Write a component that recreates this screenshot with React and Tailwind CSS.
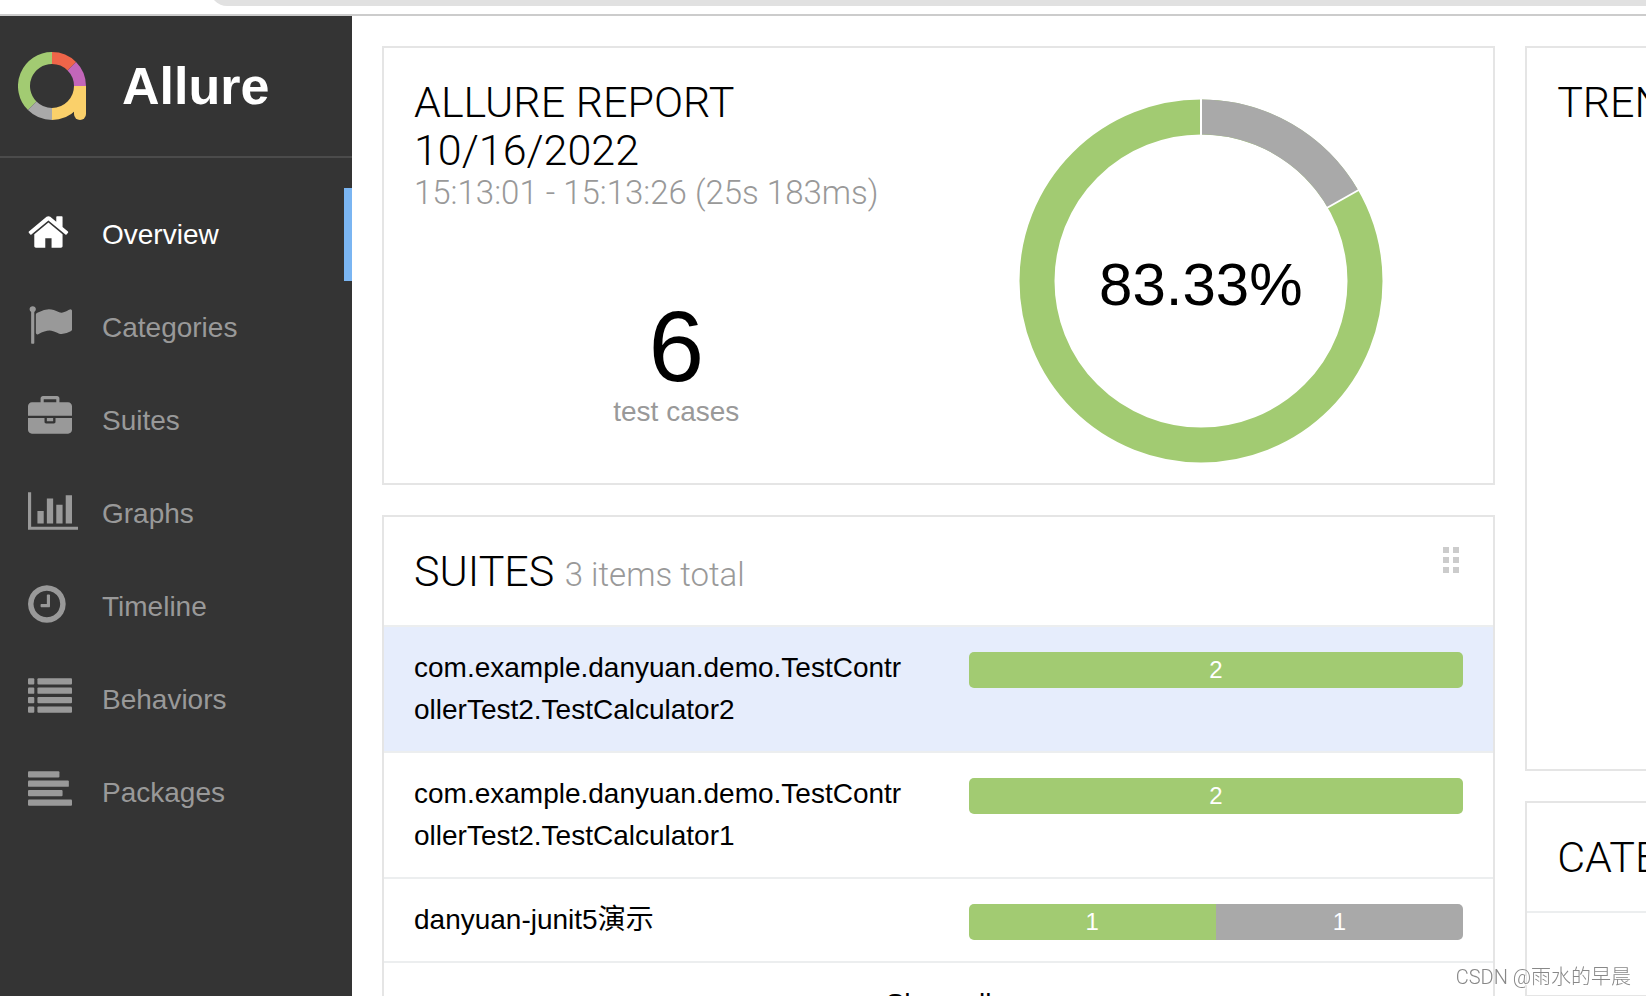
import clsx from "clsx";

// Sidebar icons, all drawn on a 1792 unit tall grid
const navItems = [
    {
        label: "Overview",
        href: "#overview",
        viewBox: "64 0 1664 1792",
        path: "M1472 992v480q0 26-19 45t-45 19h-384v-384h-256v384h-384q-26 0-45-19t-19-45v-480q0-1 .5-3t.5-3l575-474 575 474q1 2 1 6zm223-69l-62 74q-8 9-21 11h-3q-13 0-21-7l-692-577-692 577q-12 8-24 7-13-2-21-11l-62-74q-8-10-7-23.5t11-21.5l719-599q32-26 76-26t76 26l244 204v-195q0-14 9-23t23-9h192q14 0 23 9t9 23v408l219 182q10 8 11 21.5t-7 23.5z",
    },
    {
        label: "Categories",
        href: "#categories",
        viewBox: "0 0 1792 1792",
        path: "M320 256q0 72-64 110v1266q0 13-9.5 22.5t-22.5 9.5h-64q-13 0-22.5-9.5t-9.5-22.5v-1266q-64-38-64-110 0-53 37.5-90.5t90.5-37.5 90.5 37.5 37.5 90.5zm1472 64v763q0 25-12.5 38.5t-39.5 27.5q-215 116-369 116-61 0-123.5-22t-108.5-48-115.5-48-142.5-22q-192 0-464 146-17 9-33 9-26 0-45-19t-19-45v-742q0-32 31-55 21-14 79-43 236-120 421-120 107 0 200 29t219 88q38 19 88 19 54 0 117.5-21t110-47 88-47 54.5-21q26 0 45 19t19 45z",
    },
    {
        label: "Suites",
        href: "#suites",
        viewBox: "0 0 1792 1792",
        path: "M640 256h512v-128h-512v128zm1152 640v480q0 66-47 113t-113 47h-1472q-66 0-113-47t-47-113v-480h672v160q0 26 19 45t45 19h320q26 0 45-19t19-45v-160h672zm-768 0v128h-256v-128h256zm768-480v384h-1792v-384q0-66 47-113t113-47h352v-160q0-40 28-68t68-28h576q40 0 68 28t28 68v160h352q66 0 113 47t47 113z",
    },
    {
        label: "Graphs",
        href: "#graph",
        viewBox: "0 0 2048 1792",
        path: "M640 896v512h-256v-512h256zm384-512v1024h-256v-1024h256zm1024 1152v128h-2048v-1536h128v1408h1920zm-640-896v768h-256v-768h256zm384-384v1152h-256v-1152h256z",
    },
    {
        label: "Timeline",
        href: "#timeline",
        viewBox: "128 0 1536 1792",
        path: "M1024 544v448q0 14-9 23t-23 9h-320q-14 0-23-9t-9-23v-64q0-14 9-23t23-9h224v-352q0-14 9-23t23-9h64q14 0 23 9t9 23zm416 352q0-148-73-273t-198-198-273-73-273 73-198 198-73 273 73 273 198 198 273 73 273-73 198-198 73-273zm224 0q0 209-103 385.5t-279.5 279.5-385.5 103-385.5-103-279.5-279.5-103-385.5 103-385.5 279.5-279.5 385.5-103 385.5 103 279.5 279.5 103 385.5z",
    },
    {
        label: "Behaviors",
        href: "#behaviors",
        viewBox: "0 0 1792 1792",
        bars: [
            [0, 128, 256], [384, 128, 1408],
            [0, 512, 256], [384, 512, 1408],
            [0, 896, 256], [384, 896, 1408],
            [0, 1280, 256], [384, 1280, 1408],
        ],
    },
    {
        label: "Packages",
        href: "#packages",
        viewBox: "0 0 1792 1792",
        bars: [[0, 128, 1280], [0, 512, 1664], [0, 896, 1408], [0, 1280, 1792]],
    },
];

const suites = [
    { name: "com.example.danyuan.demo.TestControllerTest2.TestCalculator2", passed: 2, skipped: 0, active: true },
    { name: "com.example.danyuan.demo.TestControllerTest2.TestCalculator1", passed: 2, skipped: 0 },
    { name: "danyuan-junit5演示", passed: 1, skipped: 1 },
];

function Logo() {
    return (
        <svg className="size-[68px]" viewBox="0 0 68 68" fill="none" strokeWidth="12" aria-hidden="true">
            <path d="M34 6A28 28 0 0 1 53.8 14.2" stroke="#ee6549" />
            <path d="M53.8 14.2A28 28 0 0 1 62 34" stroke="#c366b9" />
            <path d="M14.2 53.8A28 28 0 0 1 34 6" stroke="#a2cb72" />
            <path d="M34 62A28 28 0 0 1 14.2 53.8" stroke="#a9a9a9" />
            <path d="M62 34A28 28 0 0 1 34 62" stroke="#fad06a" />
            <path d="M56 34h12v28a6 6 0 0 1-12 0z" fill="#fad06a" stroke="none" />
        </svg>
    );
}

function NavIcon({ item }) {
    return (
        <svg className="h-11 w-auto mb-1.5" viewBox={item.viewBox} fill="currentColor" aria-hidden="true">
            {item.path && <path d={item.path} />}
            {item.bars?.map(([x, y, width]) => (
                <rect key={`${x}-${y}`} x={x} y={y} width={width} height="256" rx="40" />
            ))}
        </svg>
    );
}

function Sidebar() {
    return (
        <aside className="w-[352px] shrink-0 bg-[#343434]">
            <div className="flex items-center h-[142px] pl-[18px] gap-9 border-b-2 border-[#4b4b4b]">
                <Logo />
                <span className="text-[52px] font-bold text-white">Allure</span>
            </div>
            <nav className="pt-[30px]">
                {navItems.map((item, i) => (
                    <a
                        key={item.label}
                        href={item.href}
                        className={clsx(
                            "flex items-center h-[93px] pl-7 text-[28px] border-r-8",
                            i === 0 ? "text-white border-[#7ab5f2]" : "text-[#999] border-transparent"
                        )}
                    >
                        <span className="w-[74px]">
                            <NavIcon item={item} />
                        </span>
                        {item.label}
                    </a>
                ))}
            </nav>
        </aside>
    );
}

function Card({ children }) {
    return <section className="bg-white border-2 border-[#e5e5e5]">{children}</section>;
}

function Title({ children }) {
    return (
        <h2 className="font-[Roboto,'Liberation_Sans',sans-serif] font-light text-[43px] leading-[48px] text-black">
            {children}
        </h2>
    );
}

function Donut() {
    return (
        <div className="relative size-[364px]">
            <svg className="size-full" viewBox="0 0 364 364" fill="none" aria-hidden="true">
                <circle cx="182" cy="182" r="164" stroke="#a2cb72" strokeWidth="35" />
                <path d="M182 18A164 164 0 0 1 324 100" stroke="#a9a9a9" strokeWidth="35" />
                <path d="M182 40V0M306 110L345 88" stroke="#fff" strokeWidth="2" />
            </svg>
            <div className="absolute inset-0 flex items-center justify-center pt-2 text-[60px]">83.33%</div>
        </div>
    );
}

function StatusBar({ passed, skipped }) {
    return (
        <div className="flex h-9 mt-[5px] overflow-hidden rounded-[5px] text-2xl leading-9 text-center text-white">
            {passed > 0 && <div className="bg-[#a2cb72]" style={{ flexGrow: passed }}>{passed}</div>}
            {skipped > 0 && <div className="bg-[#a9a9a9]" style={{ flexGrow: skipped }}>{skipped}</div>}
        </div>
    );
}

export default function App() {
    return (
        <div className="flex flex-col h-screen overflow-hidden bg-white text-black font-['Liberation_Sans','Noto_Sans_CJK_SC',sans-serif]">
            {/* Browser toolbar with the lower edge of the address field */}
            <div className="flex items-end h-4 shrink-0 pb-2 pl-[210px] overflow-hidden border-b-2 border-[#ccc]">
                <div className="grow h-[34px] rounded-l-full bg-[#e1e1e1]" />
            </div>

            <div className="flex grow min-h-0">
                <Sidebar />

                <main className="grow min-w-0 overflow-hidden">
                    <div className="grid items-start w-[179%] grid-cols-2 gap-[30px] p-[30px]">
                        <div className="flex flex-col gap-[30px]">
                            <Card>
                                <div className="grid grid-cols-2 px-[30px]">
                                    <div className="pt-[30px]">
                                        <Title>
                                            ALLURE REPORT
                                            <br />
                                            10/16/2022
                                            <span className="block text-[33px] leading-[38px] text-[#999]">
                                                15:13:01 - 15:13:26 (25s 183ms)
                                            </span>
                                        </Title>
                                        <div className="pt-[86px] text-center">
                                            <div className="text-[100px] leading-24">6</div>
                                            <div className="text-[28px] leading-9 text-[#999]">test cases</div>
                                        </div>
                                    </div>
                                    <div className="flex justify-center pt-[51px] pb-5">
                                        <Donut />
                                    </div>
                                </div>
                            </Card>

                            <Card>
                                <div className="flex justify-between p-[30px]">
                                    <Title>
                                        SUITES <span className="text-[33px] leading-none text-[#999]">3 items total</span>
                                    </Title>
                                    <div className="grid content-start grid-cols-2 gap-1 pr-1">
                                        {[...Array(6)].map((_, i) => (
                                            <span key={i} className="size-[6px] bg-[#ccc]" />
                                        ))}
                                    </div>
                                </div>
                                {suites.map((suite) => (
                                    <a
                                        key={suite.name}
                                        href="#suites"
                                        className={clsx(
                                            "grid items-start grid-cols-2 gap-[60px] px-[30px] py-5 border-t-2 border-[#eceeef]",
                                            suite.active && "bg-[#e6edfc]"
                                        )}
                                    >
                                        <span className="text-[28px] leading-[42px] break-all">{suite.name}</span>
                                        <StatusBar passed={suite.passed} skipped={suite.skipped} />
                                    </a>
                                ))}
                                <a
                                    href="#suites"
                                    className="block py-5 text-[28px] leading-[42px] text-center border-t-2 border-[#eceeef]"
                                >
                                    Show all
                                </a>
                            </Card>
                        </div>

                        <div className="flex flex-col gap-[30px]">
                            <Card>
                                <div className="h-[721px] p-[30px]">
                                    <Title>TREND</Title>
                                </div>
                            </Card>
                            <Card>
                                <div className="p-[30px]">
                                    <Title>CATEGORIES</Title>
                                </div>
                                <div className="h-[84px] border-t-2 border-[#eceeef]" />
                            </Card>
                        </div>
                    </div>
                </main>
            </div>

            <div className="fixed right-[15px] bottom-[5px] text-xl font-light text-[#888] text-shadow-[1px_1px_0_#fff] font-[Roboto,'Noto_Sans_CJK_SC',sans-serif]">
                CSDN @雨水的早晨
            </div>
        </div>
    );
}
